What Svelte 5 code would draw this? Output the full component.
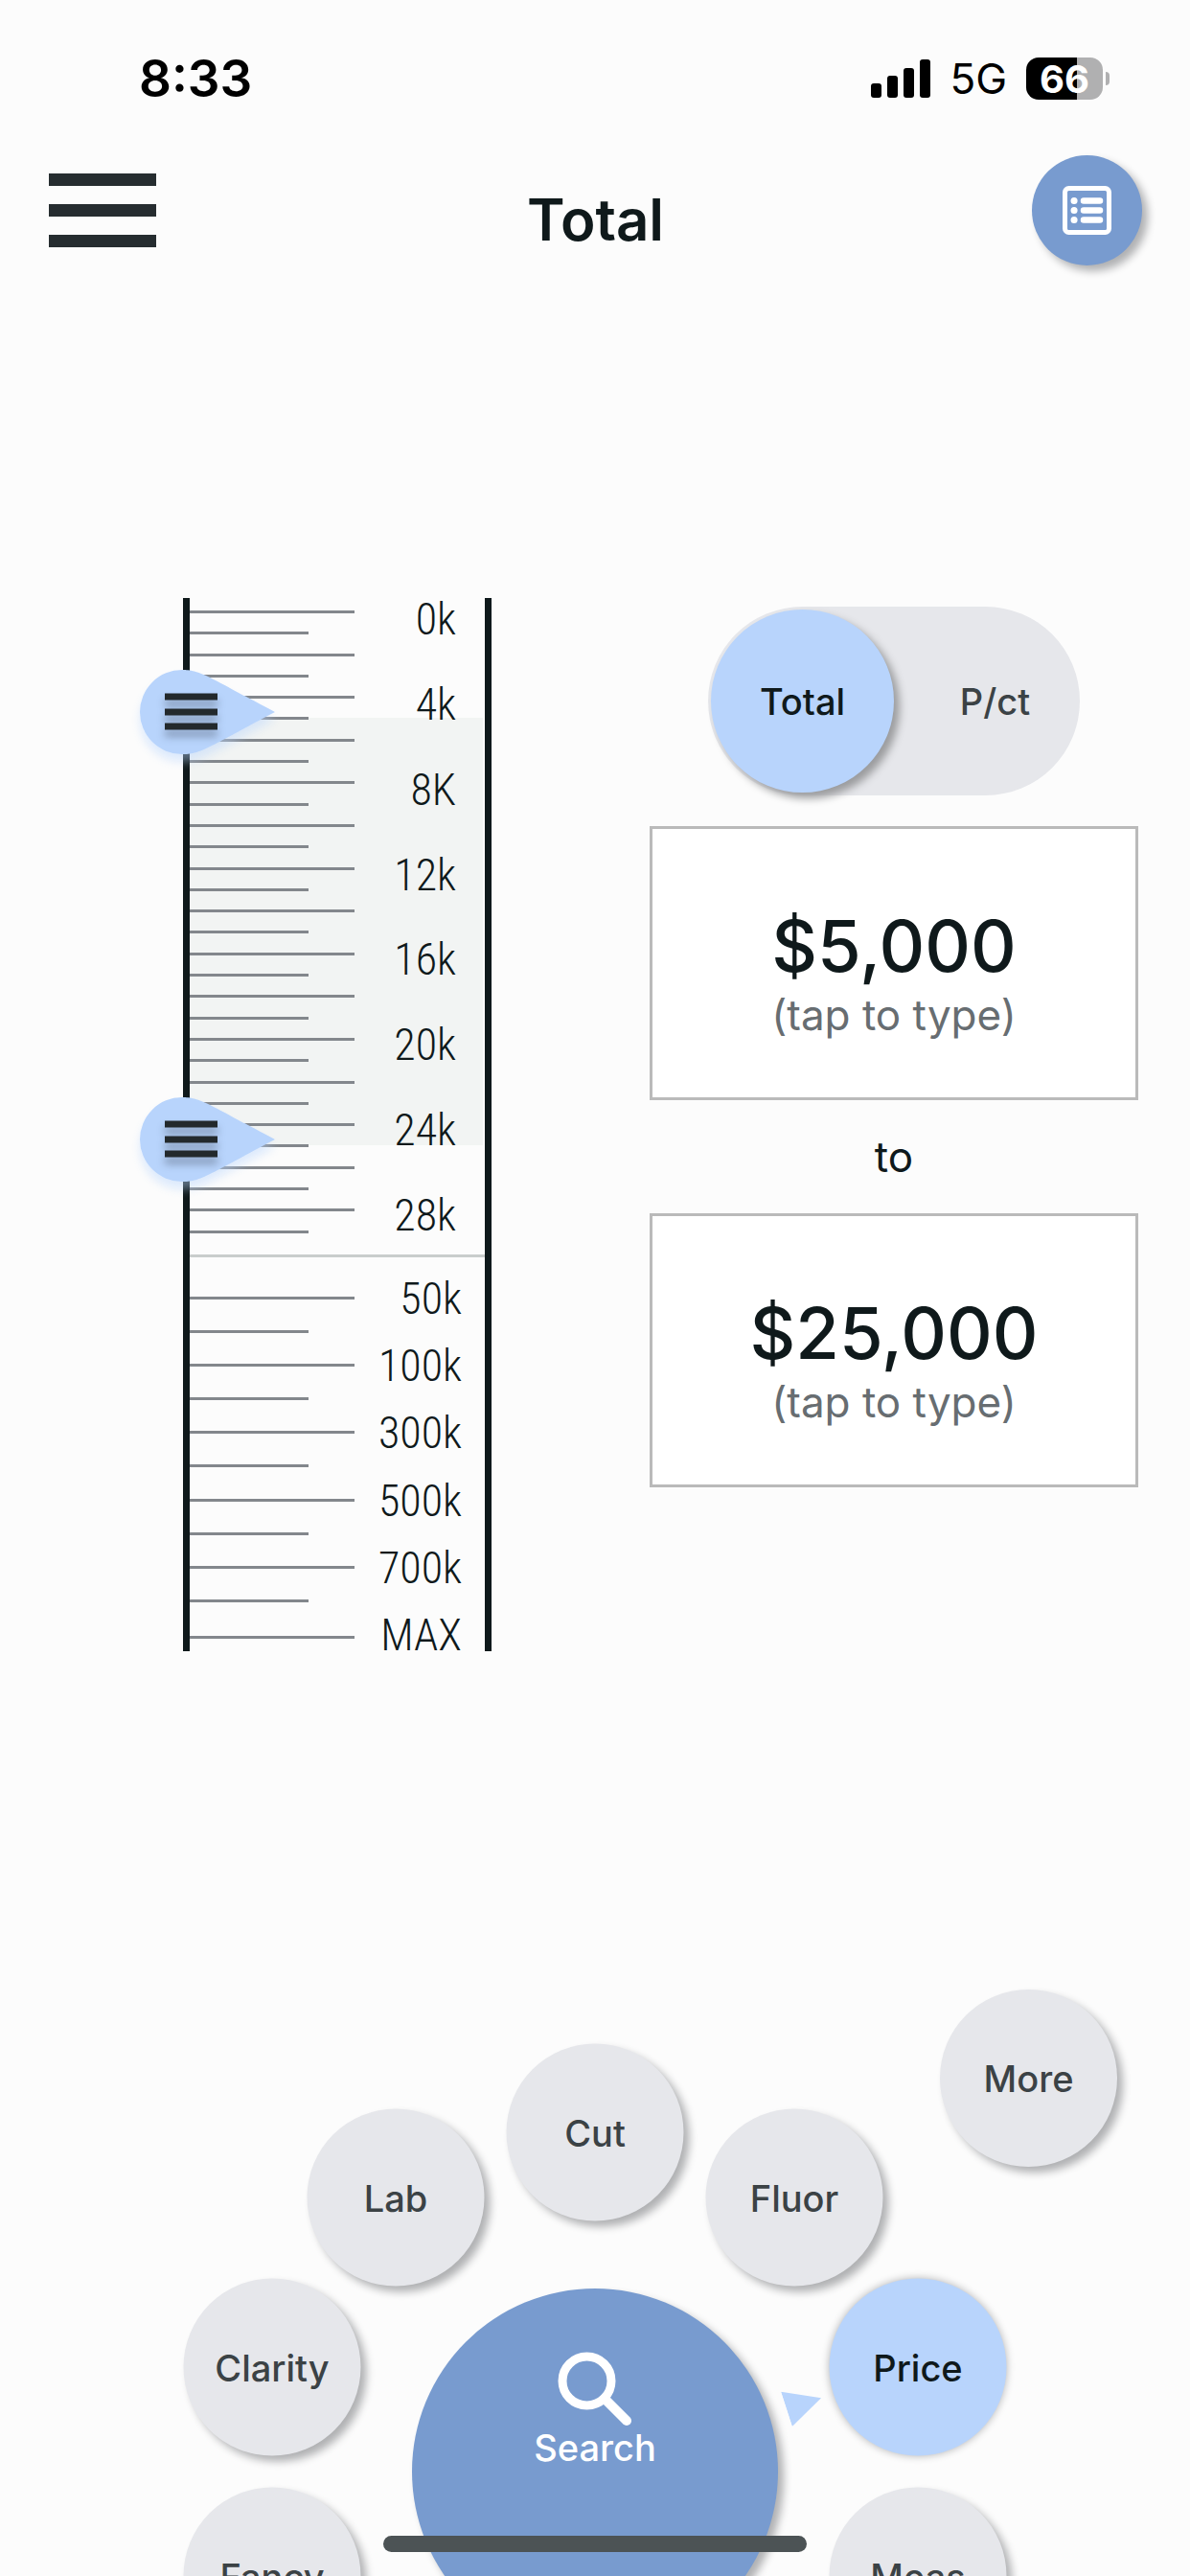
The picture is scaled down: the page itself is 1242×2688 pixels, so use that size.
<script>
	let mode = 'total';
	let from = 5000;
	let to = 25000;
	let active = 'Price';

	const lowLabels = ['0k', '4k', '8K', '12k', '16k', '20k', '24k', '28k'];
	const highLabels = ['50k', '100k', '300k', '500k', '700k', 'MAX'];

	// the buttons sit on a circle around search, angles in degrees
	const radius = 354;
	const items = [
		{ name: 'Fancy', angle: 198 },
		{ name: 'Clarity', angle: 162 },
		{ name: 'Lab', angle: 126 },
		{ name: 'Cut', angle: 90 },
		{ name: 'Fluor', angle: 54 },
		{ name: 'Price', angle: 18 },
		{ name: 'Meas', angle: -18 }
	];

	const rad = (deg) => (deg * Math.PI) / 180;
	const place = (deg, r) =>
		`left: calc(50% + ${Math.round(r * Math.cos(rad(deg)))}px); top: ${Math.round(503 - r * Math.sin(rad(deg)))}px`;

	const money = (n) => '$' + n.toLocaleString('en-US');
	const parse = (s) => Number(s.replace(/[^0-9]/g, '')) || 0;
	const scaleY = (n) => Math.round(13 + (n / 1000) * 22.3);

	$: activeAngle = items.find((i) => i.name === active)?.angle ?? 90;
</script>

<div class="screen">
	<div class="status">
		<span class="time">8:33</span>
		<div class="status-right">
			<svg width="62" height="40" viewBox="0 0 62 40" aria-hidden="true">
				<rect x="0" y="25" width="11" height="15" rx="3" />
				<rect x="17" y="17" width="11" height="23" rx="3" />
				<rect x="34" y="9" width="11" height="31" rx="3" />
				<rect x="51" y="0" width="11" height="40" rx="3" />
			</svg>
			<span class="network">5G</span>
			<div class="battery"><span>66</span></div>
		</div>
	</div>

	<header>
		<button class="menu" aria-label="Menu"><i></i><i></i><i></i></button>
		<h1>Total</h1>
		<button class="list" aria-label="Results list">
			<svg width="51" height="51" viewBox="0 0 51 51" fill="none" stroke="#fff" stroke-linecap="round">
				<rect x="2.5" y="2.5" width="46" height="46" rx="4" stroke-width="5" />
				<path d="M22 15.5h17M22 25.5h17M22 35.5h17" stroke-width="6.5" />
				<path d="M12 15.5h.1M12 25.5h.1M12 35.5h.1" stroke-width="7" />
			</svg>
		</button>
	</header>

	<main>
		<div class="ruler">
			<div class="range" style="top: {scaleY(from)}px; height: {scaleY(to) - scaleY(from)}px"></div>
			<div class="scale low">
				<div class="ticks">
					{#each Array(30) as _}
						<i></i>
					{/each}
				</div>
				<div class="labels">
					{#each lowLabels as l}
						<span>{l}</span>
					{/each}
				</div>
			</div>
			<div class="scale high">
				<div class="ticks">
					{#each Array(11) as _}
						<i></i>
					{/each}
				</div>
				<div class="labels">
					{#each highLabels as l}
						<span>{l}</span>
					{/each}
				</div>
			</div>

			<label class="handle" style="top: {scaleY(from) - 50}px">
				<input type="range" min="0" max={to} step="1000" bind:value={from} aria-label="Lowest price" />
				<svg width="142" height="88" viewBox="0 0 142 88" aria-hidden="true">
					<path class="drop" d="M44 0C64 0 72 8 141 44C72 80 64 88 44 88A44 44 0 0 1 44 0Z" />
					<path class="grip" d="M26 28h55M26 44h55M26 59h55" />
				</svg>
			</label>
			<label class="handle" style="top: {scaleY(to) - 50}px">
				<input type="range" min={from} max="29000" step="1000" bind:value={to} aria-label="Highest price" />
				<svg width="142" height="88" viewBox="0 0 142 88" aria-hidden="true">
					<path class="drop" d="M44 0C64 0 72 8 141 44C72 80 64 88 44 88A44 44 0 0 1 44 0Z" />
					<path class="grip" d="M26 28h55M26 44h55M26 59h55" />
				</svg>
			</label>
		</div>

		<div class="values">
			<div class="toggle">
				<label class:on={mode === 'total'}>
					<input type="radio" name="mode" value="total" bind:group={mode} />
					Total
				</label>
				<label class:on={mode === 'pct'}>
					<input type="radio" name="mode" value="pct" bind:group={mode} />
					P/ct
				</label>
			</div>

			<label class="amount">
				<input type="text" value={money(from)} on:change={(e) => (from = parse(e.currentTarget.value))} />
				<span>(tap to type)</span>
			</label>
			<p>to</p>
			<label class="amount">
				<input type="text" value={money(to)} on:change={(e) => (to = parse(e.currentTarget.value))} />
				<span>(tap to type)</span>
			</label>
		</div>
	</main>

	<nav>
		<button class="bubble more">More</button>
		{#each items as item}
			<button
				class="bubble orbit"
				class:active={item.name === active}
				style={place(item.angle, radius)}
				on:click={() => (active = item.name)}
			>
				{item.name}
			</button>
		{/each}
		<svg class="pointer" style="{place(activeAngle, 229)}; rotate: {-activeAngle}deg" width="38" height="38" viewBox="0 0 38 38" aria-hidden="true">
			<path d="M0 0L38 19L0 38Z" fill="#b8d4fc" />
		</svg>
		<button class="search">
			<svg width="78" height="78" viewBox="0 0 78 78" fill="none" stroke="#fff" aria-hidden="true">
				<circle cx="30.5" cy="30.5" r="25.5" stroke-width="9" />
				<path d="M49 49L72 72" stroke-width="10" stroke-linecap="round" />
			</svg>
			Search
		</button>
		<div class="home"></div>
	</nav>
</div>

<style>
	:global(body) {
		margin: 0;
		background: #fcfcfc;
	}

	.screen {
		display: flex;
		flex-direction: column;
		position: relative;
		height: 100vh;
		min-height: 2400px;
		overflow: hidden;
		font-family: Inter, 'Liberation Sans', sans-serif;
		color: #0f191b;
	}

	button {
		border: 0;
		padding: 0;
		font: inherit;
		color: inherit;
		cursor: pointer;
	}

	.status {
		display: flex;
		justify-content: space-between;
		align-items: center;
		height: 164px;
		margin-bottom: -2px;
		padding: 0 84px 0 145px;
		color: #000;
	}
	.time {
		font-size: 53px;
		font-weight: 600;
	}
	.status-right {
		display: flex;
		align-items: center;
		gap: 20px;
	}
	.network {
		font-size: 44px;
	}
	.battery {
		position: relative;
		display: flex;
		justify-content: center;
		align-items: center;
		width: 80px;
		height: 44px;
		margin-right: 7px;
		border-radius: 13px;
		background: linear-gradient(90deg, #000 66%, #b0b0b1 66%);
		color: #fff;
		font-size: 40px;
		font-weight: 700;
	}
	.battery::after {
		content: '';
		position: absolute;
		right: -7px;
		top: 15px;
		width: 4px;
		height: 14px;
		border-radius: 0 6px 6px 0;
		background: #b0b0b1;
	}

	header {
		display: grid;
		grid-template-columns: 1fr auto 1fr;
		align-items: center;
		padding: 0 50px 0 51px;
	}
	.menu {
		display: flex;
		flex-direction: column;
		gap: 19px;
		width: 112px;
		background: none;
	}
	.menu i {
		width: 100%;
		height: 13px;
		background: #262d30;
	}
	h1 {
		align-self: end;
		margin: 0;
		font-size: 60px;
		line-height: 96px;
		font-weight: 600;
	}
	.list {
		display: grid;
		place-items: center;
		justify-self: end;
		width: 115px;
		height: 115px;
		border-radius: 50%;
		background: #789bcf;
		box-shadow: 6px 6px 8px #b0b1b3;
	}

	main {
		display: flex;
		justify-content: space-between;
		align-items: flex-start;
		padding: 347px 54px 0 191px;
	}

	.ruler {
		position: relative;
		box-sizing: border-box;
		width: 322px;
		border: solid #0f191b;
		border-width: 0 7px;
	}
	.range {
		position: absolute;
		left: 0;
		right: 2px;
		background: #f2f4f3;
	}
	.scale {
		position: relative;
		display: flex;
		justify-content: space-between;
		box-sizing: border-box;
	}
	.low {
		height: 688px;
		padding: 5px 30px 24px 0;
		border-bottom: 3px solid #c9cdcc;
	}
	.high {
		height: 411px;
		padding: 26px 24px 0 0;
	}
	.ticks,
	.labels {
		display: flex;
		flex-direction: column;
		justify-content: space-between;
	}
	.low .ticks {
		height: 650px;
		margin-top: 8px;
	}
	.high .ticks {
		height: 357px;
		margin-top: 15px;
	}
	.ticks i {
		width: 172px;
		height: 3px;
		background: #83878c;
	}
	.ticks i:nth-child(even) {
		width: 124px;
	}
	.high i:last-child {
		margin-top: 3px;
	}
	.labels {
		font-family: 'Roboto Condensed', 'Liberation Sans Narrow', Roboto, sans-serif;
		font-size: 46px;
		font-weight: 300;
		line-height: 34px;
		text-align: right;
	}

	.handle {
		position: absolute;
		left: -52px;
		height: 88px;
		cursor: grab;
	}
	.handle input {
		position: absolute;
		width: 100%;
		height: 100%;
		margin: 0;
		opacity: 0;
	}
	.drop {
		fill: #b8d4fc;
	}
	.handle svg {
		display: block;
		overflow: visible;
		filter: drop-shadow(0 8px 5px rgba(184, 212, 252, 0.45));
	}
	.grip {
		stroke: #23292c;
		stroke-width: 7;
		filter: drop-shadow(0 7px 4px rgba(60, 70, 90, 0.45));
	}

	.values {
		display: flex;
		flex-direction: column;
		width: 510px;
		padding-top: 9px;
	}
	.toggle {
		display: flex;
		align-self: center;
		box-sizing: border-box;
		width: 388px;
		padding: 3px;
		margin-bottom: 32px;
		border-radius: 99px;
		background: #e6e7eb;
		font-size: 38px;
		font-weight: 500;
		color: #3b4245;
	}
	.toggle label {
		display: grid;
		place-items: center;
		box-sizing: border-box;
		width: 191px;
		height: 191px;
		border-radius: 50%;
		cursor: pointer;
	}
	.toggle label + label {
		padding-left: 20px;
	}
	.toggle .on {
		background: #b8d4fc;
		color: #0f191b;
		box-shadow: 6px 6px 8px #9b9c9e;
	}
	.toggle input {
		position: absolute;
		opacity: 0;
	}
	.amount {
		padding: 80px 0 56px;
		border: 3px solid #bababa;
		background: #fff;
		text-align: center;
	}
	.amount input {
		display: block;
		width: 100%;
		height: 84px;
		padding: 0;
		border: 0;
		background: none;
		font: 500 74px/84px Inter, 'Liberation Sans', sans-serif;
		color: inherit;
		text-align: center;
		outline: none;
	}
	.amount span {
		display: block;
		font-size: 44px;
		line-height: 60px;
		color: #676d71;
	}
	.values p {
		margin: 0;
		font-size: 44px;
		line-height: 118px;
		text-align: center;
	}

	nav {
		position: relative;
		display: flex;
		justify-content: flex-end;
		height: 612px;
		margin-top: auto;
		padding-right: 76px;
	}
	.bubble {
		width: 185px;
		height: 185px;
		border-radius: 50%;
		background: #e6e7eb;
		box-shadow: 6px 6px 8px #b0b1b3;
		font-size: 38px;
		font-weight: 500;
		color: #3b4245;
	}
	.orbit {
		position: absolute;
		transform: translate(-50%, -50%);
	}
	.pointer {
		position: absolute;
		margin: -19px;
	}
	.active {
		background: #b8d4fc;
		color: #0f191b;
		box-shadow: 0 0 8px #b0b1b3;
	}
	.search {
		position: absolute;
		left: calc(50% - 191px);
		top: 312px;
		display: flex;
		flex-direction: column;
		align-items: center;
		box-sizing: border-box;
		width: 382px;
		height: 382px;
		padding-top: 66px;
		border-radius: 50%;
		background: #789bcf;
		box-shadow: 6px 6px 8px #b0b1b3;
		font-size: 38px;
		line-height: 44px;
		font-weight: 500;
		color: #fff;
	}
	.home {
		position: absolute;
		left: calc(50% - 221px);
		bottom: 25px;
		width: 442px;
		height: 17px;
		border-radius: 9px;
		background: #4c5355;
	}
</style>
